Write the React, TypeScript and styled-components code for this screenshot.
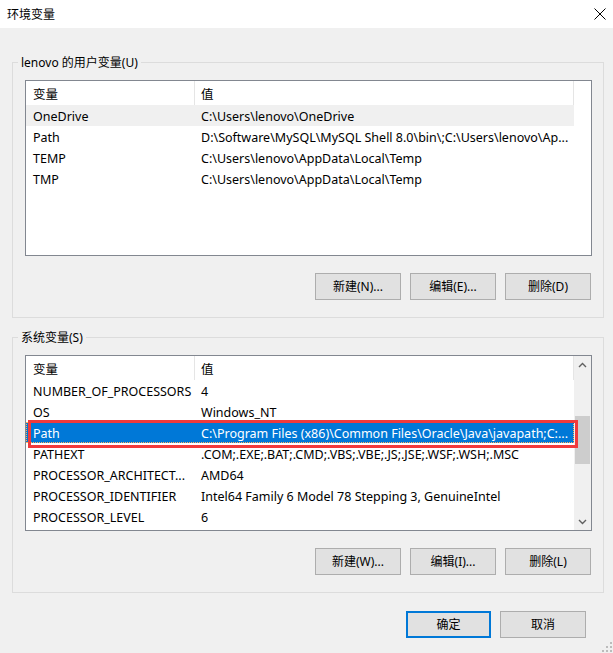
import React from 'react';
import styled, { createGlobalStyle, css } from 'styled-components';

const Global = createGlobalStyle`
  html, body { margin: 0; padding: 0; background: #f0f0f0; }
  body {
    font-family: "Noto Sans", "Noto Sans CJK SC", sans-serif;
    font-size: 12px;
    color: #000;
  }
  * { box-sizing: border-box; }
`;

const Window = styled.div`
  position: relative;
  width: 613px;
  height: 653px;
  background: #f0f0f0;
  display: flex;
  flex-direction: column;
  overflow: hidden;
`;

const TitleBar = styled.div`
  height: 28px;
  flex: 0 0 28px;
  background: #fff;
  display: flex;
  align-items: center;
  justify-content: space-between;
  padding: 0 7px;
`;

const Title = styled.span`
  font-size: 12px;
  line-height: 16px;
  font-family: "Noto Sans CJK SC", sans-serif;
`;

const CloseIcon = styled.svg`
  width: 12px;
  height: 12px;
  display: block;
`;

const Body = styled.div`
  display: flex;
  flex-direction: column;
  padding: 26px 9px 0 12px;
`;

const Group = styled.fieldset<{ $first?: boolean }>`
  margin: ${(p) => (p.$first ? '0' : '11px 0 0 0')};
  padding: 0;
  border: 1px solid #dcdcdc;
  min-width: 0;
`;

const Legend = styled.legend`
  margin-left: 5px;
  padding: 1px 3px 0;
  font-size: 12px;
  line-height: 16px;
  font-family: "Noto Sans", "Noto Sans CJK SC", sans-serif;
`;

const GroupInner = styled.div`
  display: flex;
  flex-direction: column;
  padding: 9px 11px 17px 12px;
`;

const ListBox = styled.div`
  position: relative;
  height: 176px;
  border: 1px solid #828790;
  background: #fff;
  display: flex;
`;

const Table = styled.div`
  flex: 0 0 548px;
  display: flex;
  flex-direction: column;
`;

const HeaderRow = styled.div`
  display: flex;
  height: 24px;
  flex: 0 0 24px;
`;

const HeaderCell = styled.div<{ $w: number; $pad: number }>`
  width: ${(p) => p.$w}px;
  flex: 0 0 ${(p) => p.$w}px;
  padding-left: ${(p) => p.$pad}px;
  padding-top: 2px;
  border-right: 1px solid #e5e5e5;
  line-height: 22px;
  font-size: 12.5px;
  font-family: "Noto Sans CJK SC", sans-serif;
  white-space: nowrap;
`;

const Row = styled.div<{ $selected?: boolean; $soft?: boolean }>`
  display: flex;
  height: 21px;
  flex: 0 0 21px;
  padding-top: 2px;
  line-height: 19px;
  font-size: 12.5px;
  ${(p) =>
    p.$soft &&
    css`
      background: #f0f0f0;
    `}
  ${(p) =>
    p.$selected &&
    css`
      background: #0078d7;
      color: #fff;
      outline: 1px dotted #ffb35c;
      outline-offset: -1px;
    `}
`;

const Cell = styled.div<{ $w: number; $pad: number }>`
  width: ${(p) => p.$w}px;
  flex: 0 0 ${(p) => p.$w}px;
  padding-left: ${(p) => p.$pad}px;
  white-space: nowrap;
  overflow: hidden;
`;

const ScrollBar = styled.div`
  margin-left: auto;
  width: 17px;
  flex: 0 0 17px;
  background: #f0f0f0;
  display: flex;
  flex-direction: column;
`;

const ScrollArrow = styled.div`
  height: 17px;
  flex: 0 0 17px;
  display: flex;
  align-items: center;
  justify-content: center;
`;

const ScrollTrack = styled.div`
  flex: 1;
  padding-top: 43px;
`;

const Thumb = styled.div`
  height: 48px;
  margin: 0 1px;
  background: #cdcdcd;
`;

const Highlight = styled.div`
  position: absolute;
  left: 2px;
  top: 64px;
  width: 550px;
  height: 28px;
  border: 3px solid #f03a3c;
  pointer-events: none;
`;

const ButtonRow = styled.div`
  display: flex;
  justify-content: flex-end;
  gap: 9px;
  margin-top: 17px;
  margin-right: 1px;
`;

const Button = styled.button<{ $primary?: boolean }>`
  width: ${(p) => (p.$primary ? 85 : 86)}px;
  height: 27px;
  padding: 1px 0 0;
  background: #e1e1e1;
  border: ${(p) => (p.$primary ? '2px solid #0078d7' : '1px solid #adadad')};
  font-family: "Noto Sans", "Noto Sans CJK SC", sans-serif;
  font-size: 12px;
  color: #000;
  line-height: 16px;
`;

const Footer = styled.div`
  display: flex;
  justify-content: flex-end;
  gap: 9px;
  margin-top: 18px;
  padding-right: 18px;
`;

const Grip = styled.svg`
  position: absolute;
  right: 0;
  bottom: 0;
  width: 12px;
  height: 12px;
`;

type Item = { name: string; value: string; selected?: boolean; soft?: boolean };

const userVars: Item[] = [
  { name: 'OneDrive', value: 'C:\\Users\\lenovo\\OneDrive', soft: true },
  { name: 'Path', value: 'D:\\Software\\MySQL\\MySQL Shell 8.0\\bin\\;C:\\Users\\lenovo\\Ap...' },
  { name: 'TEMP', value: 'C:\\Users\\lenovo\\AppData\\Local\\Temp' },
  { name: 'TMP', value: 'C:\\Users\\lenovo\\AppData\\Local\\Temp' },
];

const sysVars: Item[] = [
  { name: 'NUMBER_OF_PROCESSORS', value: '4' },
  { name: 'OS', value: 'Windows_NT' },
  {
    name: 'Path',
    value: 'C:\\Program Files (x86)\\Common Files\\Oracle\\Java\\javapath;C:...',
    selected: true,
  },
  { name: 'PATHEXT', value: '.COM;.EXE;.BAT;.CMD;.VBS;.VBE;.JS;.JSE;.WSF;.WSH;.MSC' },
  { name: 'PROCESSOR_ARCHITECT...', value: 'AMD64' },
  { name: 'PROCESSOR_IDENTIFIER', value: 'Intel64 Family 6 Model 78 Stepping 3, GenuineIntel' },
  { name: 'PROCESSOR_LEVEL', value: '6' },
];

const Chevron: React.FC<{ up?: boolean }> = ({ up }) => (
  <svg width="9" height="6" viewBox="0 0 9 6">
    <path
      d={up ? 'M1 5 L4.5 1.5 L8 5' : 'M1 1 L4.5 4.5 L8 1'}
      fill="none"
      stroke="#606060"
      strokeWidth="1.4"
    />
  </svg>
);

const VarList: React.FC<{ items: Item[]; scroll?: boolean; highlight?: boolean }> = ({
  items,
  scroll,
  highlight,
}) => (
  <ListBox>
    <Table>
      <HeaderRow>
        <HeaderCell $w={169} $pad={7}>变量</HeaderCell>
        <HeaderCell $w={379} $pad={6}>值</HeaderCell>
      </HeaderRow>
      {items.map((it, i) => (
        <Row key={i} $selected={it.selected} $soft={it.soft}>
          <Cell $w={169} $pad={7}>{it.name}</Cell>
          <Cell $w={379} $pad={6}>{it.value}</Cell>
        </Row>
      ))}
    </Table>
    {scroll && (
      <ScrollBar>
        <ScrollArrow>
          <Chevron up />
        </ScrollArrow>
        <ScrollTrack>
          <Thumb />
        </ScrollTrack>
        <ScrollArrow>
          <Chevron />
        </ScrollArrow>
      </ScrollBar>
    )}
    {highlight && <Highlight />}
  </ListBox>
);

export default function App() {
  return (
    <>
      <Global />
      <Window>
        <TitleBar>
          <Title>环境变量</Title>
          <CloseIcon viewBox="0 0 12 12">
            <path d="M0.5 0.5 L11.5 11.5 M11.5 0.5 L0.5 11.5" stroke="#000" strokeWidth="1" fill="none" />
          </CloseIcon>
        </TitleBar>
        <Body>
          <Group $first>
            <Legend>lenovo 的用户变量(U)</Legend>
            <GroupInner>
              <VarList items={userVars} />
              <ButtonRow>
                <Button>新建(N)...</Button>
                <Button>编辑(E)...</Button>
                <Button>删除(D)</Button>
              </ButtonRow>
            </GroupInner>
          </Group>
          <Group>
            <Legend>系统变量(S)</Legend>
            <GroupInner>
              <VarList items={sysVars} scroll highlight />
              <ButtonRow>
                <Button>新建(W)...</Button>
                <Button>编辑(I)...</Button>
                <Button>删除(L)</Button>
              </ButtonRow>
            </GroupInner>
          </Group>
          <Footer>
            <Button $primary>确定</Button>
            <Button>取消</Button>
          </Footer>
        </Body>
        <Grip viewBox="0 0 12 12">
          <rect x="9" y="1" width="2" height="2" fill="#bcbcbc" />
          <rect x="5" y="5" width="2" height="2" fill="#bcbcbc" />
          <rect x="9" y="5" width="2" height="2" fill="#bcbcbc" />
          <rect x="1" y="9" width="2" height="2" fill="#bcbcbc" />
          <rect x="5" y="9" width="2" height="2" fill="#bcbcbc" />
          <rect x="9" y="9" width="2" height="2" fill="#bcbcbc" />
        </Grip>
      </Window>
    </>
  );
}
